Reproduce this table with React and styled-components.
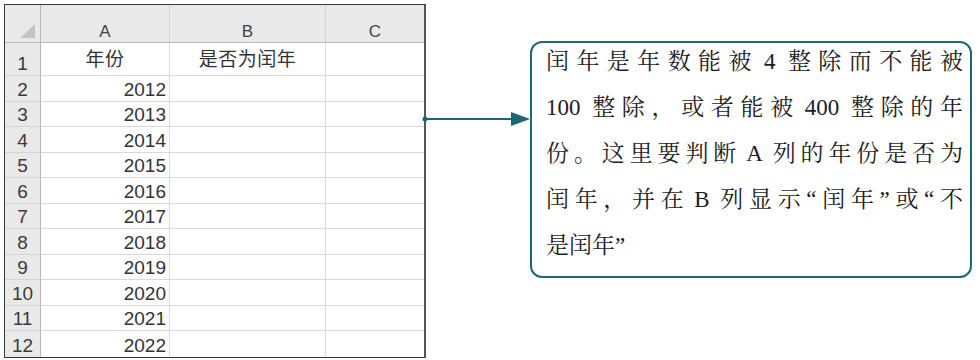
import React from "react";
import styled, { createGlobalStyle, css } from "styled-components";

const GlobalStyle = createGlobalStyle`
  html, body { margin: 0; padding: 0; background: #ffffff; }
  body { width: 980px; height: 360px; overflow: hidden; }
`;

const Page = styled.div`
  display: flex;
  align-items: flex-start;
  width: 980px;
  height: 360px;
`;

const Sheet = styled.div`
  margin: 4px 0 0 4px;
  display: grid;
  grid-template-columns: 36px 129px 156px 98px;
  grid-template-rows: 38px 33px repeat(11, 25.5px);
  border: 1px solid #3a3a3a;
  border-right: 2px solid #555;
  font-family: "Liberation Sans", "Noto Sans CJK SC", sans-serif;
  color: #333;
  background: #fff;
`;

const headerBg = "#e9e9e9";

const Corner = styled.div`
  position: relative;
  background: ${headerBg};
  border-right: 1px solid #b8b8b8;
  border-bottom: 1px solid #b8b8b8;
  &::after {
    content: "";
    position: absolute;
    right: 5px;
    bottom: 4px;
    width: 15px;
    height: 14px;
    background: #c4c4c4;
    clip-path: polygon(100% 0, 100% 100%, 0 100%);
  }
`;

const ColHeader = styled.div`
  display: flex;
  align-items: flex-end;
  justify-content: center;
  padding-bottom: 2px;
  background: ${headerBg};
  border-right: ${(p) => (p.$last ? "none" : "1px solid #d2d2d2")};
  border-bottom: 1px solid #b8b8b8;
  font-size: 17px;
  line-height: 1;
  color: #444;
`;

const RowHeader = styled.div`
  display: flex;
  align-items: flex-end;
  justify-content: center;
  padding-bottom: 2px;
  background: ${headerBg};
  border-right: 1px solid #b8b8b8;
  border-bottom: ${(p) => (p.$last ? "none" : "1px solid #d4d4d4")};
  font-size: 19px;
  line-height: 1;
  color: #3b3b3b;
`;

const Cell = styled.div`
  display: flex;
  align-items: ${(p) => (p.$middle ? "center" : "flex-end")};
  justify-content: ${(p) =>
    p.$align === "right" ? "flex-end" : p.$align === "center" ? "center" : "flex-start"};
  padding: 0 3px ${(p) => (p.$middle ? "0" : "2px")};
  border-right: ${(p) => (p.$lastCol ? "none" : "1px solid #dadada")};
  border-bottom: ${(p) => (p.$lastRow ? "none" : "1px solid #dadada")};
  font-size: 19px;
  line-height: 1;
  color: #333;
  white-space: nowrap;
  letter-spacing: ${(p) => (p.$middle ? "0.5px" : "0")};
`;

const Connector = styled.svg`
  flex: none;
  margin: 112px 0 0 -5px;
  display: block;
`;

const Note = styled.div`
  flex: none;
  box-sizing: border-box;
  margin-top: 41px;
  width: 442px;
  height: 237px;
  padding: 0 7px 0 14px;
  border: 2px solid #1d6a72;
  border-radius: 12px;
  font-family: "Liberation Serif", "Noto Serif CJK SC", "Noto Sans CJK SC", serif;
  font-size: 23px;
  line-height: 46px;
  color: #1c1c1c;
`;

const NoteText = styled.div`
  margin-top: -4px;
`;

const NoteLine = styled.div`
  white-space: nowrap;
  ${(p) =>
    p.$justify &&
    css`
      text-align: justify;
      text-align-last: justify;
    `}
`;

const Latin = styled.span`
  padding: 0 5px 0 ${(p) => (p.$lead ? "0" : "5px")};
`;

const columns = [
  { key: "A", header: "年份" },
  { key: "B", header: "是否为闰年" },
  { key: "C", header: "" },
];

const years = [2012, 2013, 2014, 2015, 2016, 2017, 2018, 2019, 2020, 2021, 2022];

const noteLines = [
  "闰年是年数能被4整除而不能被",
  "100整除，或者能被400整除的年",
  "份。这里要判断A列的年份是否为",
  "闰年，并在B列显示“闰年”或“不",
  "是闰年”",
];

function renderLine(text) {
  const parts = text.split(/([A-Za-z0-9]+)/);
  return parts.map((p, i) => {
    if (!p) return null;
    if (/^[A-Za-z0-9]+$/.test(p)) {
      return (
        <Latin key={i} $lead={i === 1 && parts[0] === ""}>
          {p}
        </Latin>
      );
    }
    return <React.Fragment key={i}>{p}</React.Fragment>;
  });
}

export default function App() {
  const totalRows = years.length + 1;
  return (
    <>
      <GlobalStyle />
      <Page>
        <Sheet>
          <Corner />
          {columns.map((c, i) => (
            <ColHeader key={c.key} $last={i === columns.length - 1}>
              {c.key}
            </ColHeader>
          ))}

          <RowHeader>1</RowHeader>
          {columns.map((c, i) => (
            <Cell
              key={c.key}
              $middle
              $align="center"
              $lastCol={i === columns.length - 1}
            >
              {c.header}
            </Cell>
          ))}

          {years.map((y, r) => {
            const rowNum = r + 2;
            const lastRow = rowNum === totalRows;
            return (
              <React.Fragment key={y}>
                <RowHeader $last={lastRow}>{rowNum}</RowHeader>
                <Cell $align="right" $lastRow={lastRow}>
                  {y}
                </Cell>
                <Cell $lastRow={lastRow} />
                <Cell $lastRow={lastRow} $lastCol />
              </React.Fragment>
            );
          })}
        </Sheet>

        <Connector width="109" height="14" viewBox="0 0 109 14">
          <circle cx="4" cy="7" r="2.5" fill="#1b6670" />
          <line x1="4" y1="7" x2="92" y2="7" stroke="#1b6670" strokeWidth="2" />
          <polygon points="90,0 109,7 90,14" fill="#1b6670" />
        </Connector>

        <Note>
          <NoteText>
            {noteLines.map((t, i) => (
              <NoteLine key={i} $justify={i < noteLines.length - 1}>
                {renderLine(t)}
              </NoteLine>
            ))}
          </NoteText>
        </Note>
      </Page>
    </>
  );
}
